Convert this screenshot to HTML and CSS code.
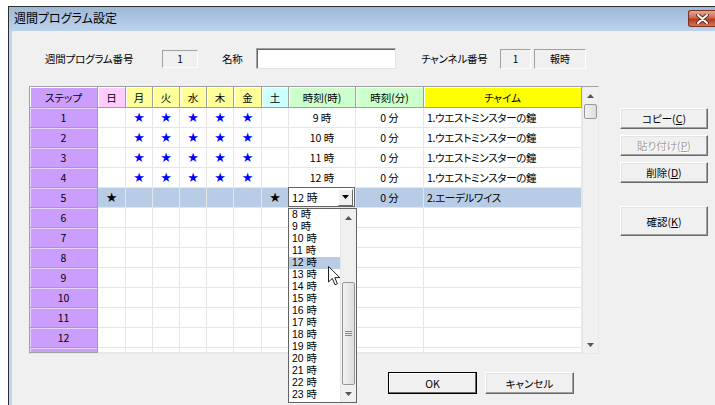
FILE: index.html
```html
<!DOCTYPE html>
<html>
<head>
  <meta charset="utf-8">
  <title>週間プログラム設定</title>
  <link rel="stylesheet" href="styles.css">
</head>
<body>
  <div class="window">
    <div class="titlebar">
      <span class="title">週間プログラム設定</span>
      <span class="close">
        <svg width="13" height="10" viewBox="0 0 13 10"><path d="M2 1 L11 9 M11 1 L2 9" stroke="#6b2a20" stroke-width="4" stroke-linecap="round"/><path d="M2 1 L11 9 M11 1 L2 9" stroke="#fff" stroke-width="2" stroke-linecap="round"/></svg>
      </span>
    </div>
    <div class="client">
      <div class="info-row">
        <span class="label prog-label">週間プログラム番号</span>
        <span class="static num-box">1</span>
        <span class="label name-label">名称</span>
        <span class="edit"></span>
        <span class="label ch-label">チャンネル番号</span>
        <span class="static ch-box">1</span>
        <span class="static ch-name">報時</span>
      </div>

      <div class="main">
        <div class="grid-frame">
          <div class="grid">
            <div class="h h-step">ステップ</div>
            <div class="h h-sun">日</div>
            <div class="h h-wd">月</div>
            <div class="h h-wd">火</div>
            <div class="h h-wd">水</div>
            <div class="h h-wd">木</div>
            <div class="h h-wd">金</div>
            <div class="h h-sat">土</div>
            <div class="h h-time">時刻(時)</div>
            <div class="h h-time">時刻(分)</div>
            <div class="h h-chime">チャイム</div>

            <div class="step">1</div>
            <div class="c"></div>
            <div class="c star">★</div><div class="c star">★</div><div class="c star">★</div><div class="c star">★</div><div class="c star">★</div>
            <div class="c"></div>
            <div class="c">9 時</div>
            <div class="c">0 分</div>
            <div class="c chime">1.ウエストミンスターの鐘</div>

            <div class="step">2</div>
            <div class="c"></div>
            <div class="c star">★</div><div class="c star">★</div><div class="c star">★</div><div class="c star">★</div><div class="c star">★</div>
            <div class="c"></div>
            <div class="c">10 時</div>
            <div class="c">0 分</div>
            <div class="c chime">1.ウエストミンスターの鐘</div>

            <div class="step">3</div>
            <div class="c"></div>
            <div class="c star">★</div><div class="c star">★</div><div class="c star">★</div><div class="c star">★</div><div class="c star">★</div>
            <div class="c"></div>
            <div class="c">11 時</div>
            <div class="c">0 分</div>
            <div class="c chime">1.ウエストミンスターの鐘</div>

            <div class="step">4</div>
            <div class="c"></div>
            <div class="c star">★</div><div class="c star">★</div><div class="c star">★</div><div class="c star">★</div><div class="c star">★</div>
            <div class="c"></div>
            <div class="c">12 時</div>
            <div class="c">0 分</div>
            <div class="c chime">1.ウエストミンスターの鐘</div>

            <div class="step">5</div>
            <div class="c sel star black">★</div>
            <div class="c sel"></div><div class="c sel"></div><div class="c sel"></div><div class="c sel"></div><div class="c sel"></div>
            <div class="c sel star black">★</div>
            <div class="c combo-cell">
              <div class="combo">
                <span class="combo-text">12 時</span>
                <span class="combo-btn"><svg width="7" height="4" viewBox="0 0 7 4"><path d="M0 0 H7 L3.5 4 Z" fill="#000"/></svg></span>
              </div>
              <div class="dropdown">
                <div class="list">
                  <div class="item">8 時</div>
                  <div class="item">9 時</div>
                  <div class="item">10 時</div>
                  <div class="item">11 時</div>
                  <div class="item active">12 時</div>
                  <div class="item">13 時</div>
                  <div class="item">14 時</div>
                  <div class="item">15 時</div>
                  <div class="item">16 時</div>
                  <div class="item">17 時</div>
                  <div class="item">18 時</div>
                  <div class="item">19 時</div>
                  <div class="item">20 時</div>
                  <div class="item">21 時</div>
                  <div class="item">22 時</div>
                  <div class="item">23 時</div>
                </div>
                <div class="list-scroll">
                  <span class="arrow"><svg width="7" height="4" viewBox="0 0 7 4"><path d="M0 4 H7 L3.5 0 Z" fill="#555"/></svg></span>
                  <span class="track"></span>
                  <span class="thumb"><svg width="7" height="6" viewBox="0 0 7 6"><path d="M0 0.5 H7 M0 2.5 H7 M0 4.5 H7" stroke="#8a8a8a"/></svg></span>
                  <span class="arrow"><svg width="7" height="4" viewBox="0 0 7 4"><path d="M0 0 H7 L3.5 4 Z" fill="#555"/></svg></span>
                </div>
                <svg class="cursor" width="13" height="20" viewBox="0 0 13 20"><path d="M0.5 0.5 V16 L4.3 12.4 L7 18.8 L9.4 17.8 L6.8 11.6 H11.8 Z" fill="#fff" stroke="#222" stroke-width="1" stroke-linejoin="round"/></svg>
              </div>
            </div>
            <div class="c sel">0 分</div>
            <div class="c sel chime">2.エーデルワイス</div>

            <div class="step">6</div>
            <div class="c"></div><div class="c"></div><div class="c"></div><div class="c"></div><div class="c"></div><div class="c"></div><div class="c"></div><div class="c"></div><div class="c"></div><div class="c"></div>
            <div class="step">7</div>
            <div class="c"></div><div class="c"></div><div class="c"></div><div class="c"></div><div class="c"></div><div class="c"></div><div class="c"></div><div class="c"></div><div class="c"></div><div class="c"></div>
            <div class="step">8</div>
            <div class="c"></div><div class="c"></div><div class="c"></div><div class="c"></div><div class="c"></div><div class="c"></div><div class="c"></div><div class="c"></div><div class="c"></div><div class="c"></div>
            <div class="step">9</div>
            <div class="c"></div><div class="c"></div><div class="c"></div><div class="c"></div><div class="c"></div><div class="c"></div><div class="c"></div><div class="c"></div><div class="c"></div><div class="c"></div>
            <div class="step">10</div>
            <div class="c"></div><div class="c"></div><div class="c"></div><div class="c"></div><div class="c"></div><div class="c"></div><div class="c"></div><div class="c"></div><div class="c"></div><div class="c"></div>
            <div class="step">11</div>
            <div class="c"></div><div class="c"></div><div class="c"></div><div class="c"></div><div class="c"></div><div class="c"></div><div class="c"></div><div class="c"></div><div class="c"></div><div class="c"></div>
            <div class="step">12</div>
            <div class="c"></div><div class="c"></div><div class="c"></div><div class="c"></div><div class="c"></div><div class="c"></div><div class="c"></div><div class="c"></div><div class="c"></div><div class="c"></div>
            <div class="step"></div>
            <div class="c"></div><div class="c"></div><div class="c"></div><div class="c"></div><div class="c"></div><div class="c"></div><div class="c"></div><div class="c"></div><div class="c"></div><div class="c"></div>
          </div>
          <div class="vscroll">
            <span class="arrow"><svg width="7" height="4" viewBox="0 0 7 4"><path d="M0 4 H7 L3.5 0 Z" fill="#555"/></svg></span>
            <span class="thumb small"></span>
            <span class="track"></span>
            <span class="arrow"><svg width="7" height="4" viewBox="0 0 7 4"><path d="M0 0 H7 L3.5 4 Z" fill="#555"/></svg></span>
          </div>
        </div>

        <div class="side-buttons">
          <button class="btn">コピー(<u>C</u>)</button>
          <button class="btn" disabled>貼り付け(<u>P</u>)</button>
          <button class="btn">削除(<u>D</u>)</button>
          <button class="btn tall">確認(<u>K</u>)</button>
        </div>
      </div>

      <div class="bottom-buttons">
        <button class="btn wide default">OK</button>
        <button class="btn wide">キャンセル</button>
      </div>
    </div>
  </div>
</body>
</html>
```

FILE: styles.css
```css
html, body {
  margin: 0;
  background: #fff;
  overflow: hidden;
  font-family: "Liberation Sans", "Noto Sans CJK JP", sans-serif;
  color: #000;
}

.window {
  margin: 6px 0 0 8px;
  height: 399px;
  border-top: 1px solid #2e2e2e;
  border-left: 1px solid #2e2e2e;
  display: flex;
  flex-direction: column;
}

.titlebar {
  height: 24px;
  flex: none;
  display: flex;
  align-items: flex-start;
  background: linear-gradient(#9db8d7, #bdd3ec);
}

.title {
  margin: 4px 0 0 5px;
  font-size: 12px;
  line-height: 14px;
  font-family: "Noto Sans CJK JP", sans-serif;
  font-feature-settings: "palt";
}

.close {
  margin: 3px 0 0 auto;
  width: 27px;
  height: 17px;
  box-sizing: border-box;
  border: 1px solid #7d3024;
  border-radius: 3px 0 0 3px;
  border-right: none;
  background: linear-gradient(#e6a796, #cf6a52 45%, #b8381f 55%, #d0765a);
  display: flex;
  align-items: center;
  justify-content: center;
}

.client {
  flex: 1;
  border-left: 3px solid #c0d4ec;
  background: #f0f0f0;
  font-size: 10px;
  font-family: "Noto Sans CJK JP", sans-serif;
  font-feature-settings: "palt";
}

/* top info row */
.info-row {
  display: flex;
  align-items: center;
  height: 21px;
  margin-top: 17px;
  padding-left: 33px;
}

.label {
  font-size: 10.5px;
  letter-spacing: -0.2px;
}

.prog-label { width: 117px; }
.name-label { width: 34px; margin-left: 24px; }
.ch-label { width: 79px; margin-left: 25px; }

.static {
  height: 18px;
  box-sizing: border-box;
  border: 1px solid;
  border-color: #a0a0a0 #fff #fff #a0a0a0;
  display: flex;
  align-items: center;
  justify-content: center;
}

.num-box { width: 36px; }
.ch-box { width: 31px; height: 20px; }
.ch-name { width: 52px; margin-left: 3px; height: 20px; }

.edit {
  width: 140px;
  height: 21px;
  box-sizing: border-box;
  background: #fff;
  border: 1px solid;
  border-color: #a0a0a0 #e3e3e3 #e3e3e3 #a0a0a0;
  box-shadow: inset 1px 1px #696969;
}

/* grid */
.main {
  display: flex;
  margin: 17px 0 0 17px;
}

.grid-frame {
  display: flex;
  border: 1px solid;
  border-color: #a0a0a0 #e8e8e8 #e8e8e8 #a0a0a0;
  background: #fff;
}

.grid {
  display: grid;
  grid-template-columns: 68px 28px 27px 27px 27px 27px 28px 27px 67px 68px 158px;
  grid-template-rows: 21px repeat(12, 20px) 5px;
  font-family: "Liberation Sans Narrow", "Noto Sans CJK JP", sans-serif;
}

.grid > div {
  box-sizing: border-box;
  display: flex;
  align-items: center;
  justify-content: center;
  font-size: 10.5px;
  white-space: nowrap;
  overflow: hidden;
}

.h {
  border-right: 1px solid #a0a0a0;
  border-bottom: 1px solid #a0a0a0;
  box-shadow: inset 1px 1px #fff;
  font-family: "Noto Sans CJK JP", sans-serif;
}

.h-step { background: #cb9dfd; }
.h-sun { background: #ffccfe; }
.h-wd { background: #ffff9a; }
.h-sat { background: #ccffff; }
.h-time { background: #ccffcc; }
.h-chime { background: #ffff00; }

.step {
  background: #cb9dfd;
  border-right: 1px solid #a0a0a0;
  border-bottom: 1px solid #a0a0a0;
  box-shadow: inset 1px 1px #e6d4ff;
}

.c {
  border-right: 1px solid #e6e6e6;
  border-bottom: 1px solid #e6e6e6;
}

.grid > .chime {
  justify-content: flex-start;
  padding-left: 3px;
  font-family: "Noto Sans CJK JP", sans-serif;
  letter-spacing: -0.3px;
}

.grid > .star {
  font-family: "DejaVu Sans", sans-serif;
  font-size: 13px;
  color: #0000ff;
}

.grid > .star.black { color: #000; }

.sel {
  background: #b8cce6;
}

.grid > .combo-cell {
  overflow: visible;
  position: relative;
  align-items: stretch;
  justify-content: stretch;
  background: #b8cce6;
}

.combo {
  flex: 1;
  display: flex;
  align-items: center;
  background: #fff;
  border: 1px solid #646464;
  margin: -1px 0 0 -1px;
}

.combo-text {
  flex: 1;
  padding-left: 3px;
  font-size: 11px;
}

.combo-btn {
  width: 15px;
  height: 17px;
  box-sizing: border-box;
  margin-right: 1px;
  border: 1px solid;
  border-color: #fff #696969 #696969 #fff;
  background: #f0f0f0;
  display: flex;
  align-items: center;
  justify-content: center;
}

/* dropdown list */
.dropdown {
  position: absolute;
  left: -1px;
  top: 20px;
  width: 69px;
  height: 195px;
  box-sizing: border-box;
  border: 1px solid #646464;
  background: #fff;
  display: flex;
  z-index: 5;
}

.list {
  flex: 1;
}

.item {
  height: 12px;
  line-height: 12px;
  font-family: "Liberation Sans", "Noto Sans CJK JP", sans-serif;
  font-size: 10.4px;
  padding-left: 3px;
}

.item.active {
  background: #b8cce6;
}

.list-scroll, .vscroll {
  width: 16px;
  display: flex;
  flex-direction: column;
  background: #f0f0f0;
  border-left: 1px solid #e6e6e6;
  box-sizing: border-box;
}

.arrow {
  height: 17px;
  flex: none;
  display: flex;
  align-items: center;
  justify-content: center;
}

.track { flex: 1; }

.thumb {
  height: 103px;
  flex: none;
  margin: 0 1px;
  box-sizing: border-box;
  border: 1px solid #979797;
  border-radius: 2px;
  background: linear-gradient(90deg, #f2f2f2, #dedede);
  display: flex;
  align-items: center;
  justify-content: center;
}

.thumb.small { height: 15px; }

.cursor {
  position: absolute;
  left: 39px;
  top: 57px;
}

/* buttons */
.btn {
  font-family: "Noto Sans CJK JP", sans-serif;
  font-feature-settings: "palt";
  font-size: 10.5px;
  color: #000;
  padding: 0;
  height: 21px;
  width: 88px;
  box-sizing: border-box;
  background: #f0f0f0;
  border: 1px solid;
  border-color: #fff #696969 #696969 #fff;
  box-shadow: inset -1px -1px #a0a0a0, inset 1px 1px #e3e3e3;
}

.btn:disabled {
  color: #a0a0a0;
  text-shadow: 1px 1px #fff;
}

.btn.tall { height: 30px; margin-top: 17px; }

.side-buttons {
  display: flex;
  flex-direction: column;
  gap: 6px;
  margin: 22px 0 0 21px;
}

.bottom-buttons {
  display: flex;
  gap: 8px;
  margin: 18px 0 0 376px;
}

.btn.wide { width: 89px; height: 22px; }

.btn.default {
  border-color: #000;
  box-shadow: inset -1px -1px #696969, inset 1px 1px #fff;
}
```
